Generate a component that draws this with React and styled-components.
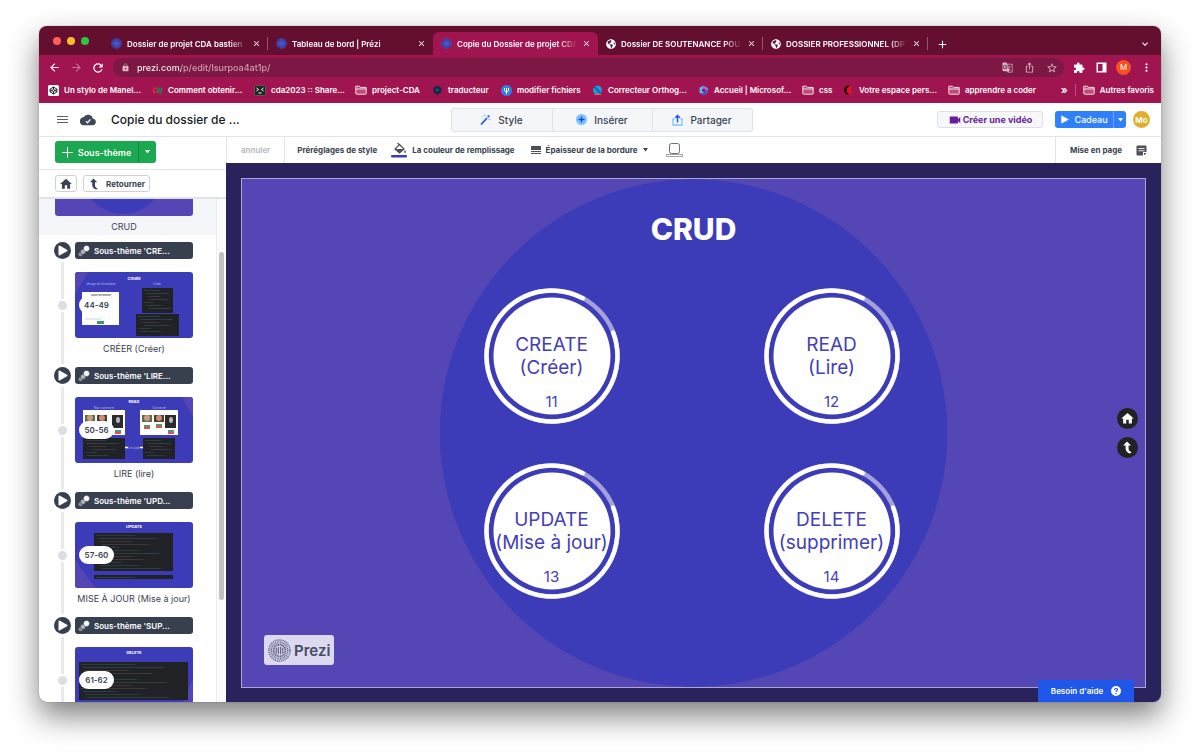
import React from "react";
import styled, { createGlobalStyle, css } from "styled-components";
import {
  MdArrowBack, MdArrowForward, MdRefresh, MdLock, MdGTranslate, MdIosShare, MdStarBorder,
  MdExtension, MdMoreVert, MdAdd, MdClose, MdExpandMore, MdVideocam, MdHome,
} from "react-icons/md";
import { FaGlobeAmericas } from "react-icons/fa";

const Global = createGlobalStyle`
  *, *::before, *::after { box-sizing: border-box; }
  body { margin: 0; background: #fff; font-family: Inter, "Liberation Sans", sans-serif; }
  button, input { font: inherit; color: inherit; border: 0; background: none; padding: 0; margin: 0; }
  button { cursor: pointer; white-space: nowrap; }
  a { color: inherit; text-decoration: none; }
  svg { display: block; flex: none; }
`;

const Page = styled.div`
  height: 100vh;
  min-height: 480px;
  padding: 26px 39px 51px;
  overflow: hidden;
`;

const Window = styled.div`
  height: 100%;
  display: flex;
  flex-direction: column;
  overflow: hidden;
  border-radius: 8px;
  background: #fff;
  box-shadow: 0 0 1px rgba(0, 0, 0, 0.6), 0 14px 30px rgba(0, 0, 0, 0.5);
`;

/* Browser chrome */

const TabStrip = styled.div`
  display: flex;
  align-items: flex-end;
  height: 29px;
  flex: none;
  padding: 0 11px 0 14px;
  background: #640e30;
  color: #fff;
`;

const Lights = styled.div`
  display: flex;
  align-items: center;
  gap: 6px;
  height: 28px;
  width: 50px;
  flex: none;
`;

const Light = styled.span`
  width: 8px;
  height: 8px;
  border-radius: 50%;
  background: ${(p) => p.$color};
`;

const Tab = styled.div`
  display: flex;
  align-items: center;
  gap: 5px;
  flex: 0 1 165px;
  min-width: 0;
  height: 23px;
  padding: 0 7px 0 8px;
  border-radius: 6px 6px 0 0;
  position: relative;
  ${(p) => p.$active && css`background: #a0154f;`}
  ${(p) => p.$divider && css`
    &::after {
      content: "";
      position: absolute;
      right: 0;
      top: 5px;
      width: 1px;
      height: 13px;
      background: #93546c;
    }
  `}
`;

const TabTitle = styled.button`
  flex: 1;
  min-width: 0;
  overflow: hidden;
  text-align: left;
  font-size: 8px;
  font-weight: 600;
  line-height: 12px;
  mask-image: linear-gradient(to right, #000 85%, transparent);
`;

const IconButton = styled.button`
  display: grid;
  place-items: center;
  flex: none;
  width: ${(p) => p.$size || 11}px;
  height: ${(p) => p.$size || 11}px;
  color: ${(p) => p.$color || "inherit"};
`;

const NewTab = styled(IconButton)`
  margin: 0 auto 6px 8px;
`;

const TabMenu = styled(IconButton)`
  margin-bottom: 6px;
`;

const AddressRow = styled.div`
  display: flex;
  align-items: center;
  gap: 8px;
  height: 25px;
  flex: none;
  padding: 0 8px;
  background: #a0154f;
  color: #fff;
`;

const Omnibox = styled.label`
  display: flex;
  align-items: center;
  gap: 11px;
  flex: 1;
  min-width: 0;
  height: 19px;
  padding: 0 7px 0 8px;
  border-radius: 10px;
  background: #7d1844;
  color: #d9b5c5;
`;

const UrlInput = styled.input`
  flex: 1;
  min-width: 0;
  margin-left: -4px;
  font-size: 9px;
  font-weight: 500;
  line-height: 14px;
  outline: 0;
  color: transparent;
  background: linear-gradient(to right, #fff 44px, #d3a3b7 44px);
  -webkit-background-clip: text;
  background-clip: text;
`;

const Profile = styled.button`
  width: 15px;
  height: 15px;
  border-radius: 50%;
  background: #f4511e;
  font-size: 8px;
  line-height: 15px;
  text-align: center;
`;

const BookmarkBar = styled.nav`
  display: flex;
  align-items: center;
  height: 23px;
  flex: none;
  padding: 0 7px 3px 9px;
  background: #a0154f;
  color: #fff;
  overflow: hidden;
`;

const Bookmark = styled.a`
  display: flex;
  align-items: center;
  gap: 5px;
  flex: 0 0 ${(p) => (p.$width ? `${p.$width}px` : "auto")};
  font-size: 8px;
  font-weight: 600;
  line-height: 12px;
  white-space: nowrap;
`;

const MoreBookmarks = styled.button`
  margin-left: auto;
  font-size: 11px;
  font-weight: 600;
  line-height: 12px;
  padding-right: 7px;
  margin-right: 7px;
  border-right: 1px solid #bd4d7b;
`;

/* Application */

const Header = styled.header`
  display: grid;
  grid-template-columns: 1fr auto 1fr;
  align-items: center;
  height: 34px;
  flex: none;
  padding: 0 11px 0 14px;
  border-bottom: 1px solid #e3e4e6;
  color: #3a4250;
`;

const HeaderSide = styled.div`
  display: flex;
  align-items: center;
  gap: 12px;
  padding-left: 3px;
  justify-content: ${(p) => (p.$end ? "flex-end" : "flex-start")};
`;

const Title = styled.h1`
  margin: 0 0 0 3px;
  font-size: 12px;
  font-weight: 500;
  line-height: 16px;
  white-space: nowrap;
  color: #16181c;
`;

const Segments = styled.div`
  display: flex;
  border: 1px solid #dfe2e8;
  border-radius: 3px;
  background: #f5f6f9;
`;

const Segment = styled.button`
  display: flex;
  align-items: center;
  justify-content: center;
  gap: 7px;
  width: 100px;
  height: 22px;
  font-size: 10px;
  font-weight: 500;
  & + & { border-left: 1px solid #dfe2e8; }
`;

const VideoButton = styled.button`
  display: flex;
  align-items: center;
  justify-content: center;
  gap: 1px;
  width: 106px;
  height: 17px;
  border: 1px solid #dcdfe5;
  border-radius: 3px;
  background: #f6f7f9;
  font-size: 9px;
  font-weight: 700;
  color: #6a1b9a;
`;

const SplitButton = styled.div`
  display: flex;
  height: ${(p) => p.$height}px;
  border-radius: 3px;
  overflow: hidden;
  background: ${(p) => p.$bg};
  color: #fff;
`;

const SplitMain = styled.button`
  display: flex;
  align-items: center;
  justify-content: center;
  gap: 5px;
  width: ${(p) => p.$width}px;
  font-size: 9px;
  font-weight: ${(p) => p.$weight};
`;

const SplitMore = styled.button`
  display: grid;
  place-items: center;
  width: ${(p) => p.$width}px;
  border-left: 1px solid ${(p) => p.$line};
`;

const Avatar = styled.button`
  width: 17px;
  height: 17px;
  margin-left: -5px;
  border-radius: 50%;
  background: #e2ad2b;
  color: #fff;
  font-size: 8px;
  font-weight: 700;
`;

const Body = styled.div`
  display: flex;
  flex: 1;
  min-height: 0;
`;

const Sidebar = styled.aside`
  display: flex;
  flex-direction: column;
  width: 187px;
  flex: none;
  color: #3a4250;
`;

const AddRow = styled.div`
  display: flex;
  padding: 4px 16px 6px;
  border-bottom: 1px solid #e3e4e6;
`;

const BackRow = styled.div`
  display: flex;
  gap: 6px;
  padding: 5px 16px;
  border-bottom: 2px solid #e1e3e8;
`;

const OutlineButton = styled.button`
  display: flex;
  align-items: center;
  justify-content: center;
  gap: 6px;
  width: ${(p) => p.$width}px;
  height: 17px;
  border: 1px solid #cfd1d6;
  border-radius: 3px;
  background: #fff;
  font-size: 8px;
  font-weight: 700;
`;

const ListArea = styled.div`
  display: flex;
  flex: 1;
  min-height: 0;
  overflow: hidden;
`;

const PathList = styled.div`
  flex: 1;
  min-width: 0;
`;

const ScrollTrack = styled.div`
  width: 10px;
  flex: none;
  padding: 53px 2px 0;
  background: #fafafa;
  border-left: 1px solid #ededed;
`;

const ScrollThumb = styled.div`
  height: 348px;
  border-radius: 3px;
  background: #c1c1c1;
`;

const CurrentTopic = styled.div`
  height: 36px;
  padding: 0 23px 0 16px;
  background: #f5f6f9;
`;

const Caption = styled.div`
  font-size: 9px;
  font-weight: 400;
  line-height: 12px;
  text-align: center;
  white-space: nowrap;
  padding-top: 5px;
`;

const Topic = styled.section`
  display: grid;
  grid-template-columns: 17px 118px;
  grid-template-rows: 17px 13px 66px 17px;
  column-gap: 4px;
  height: 125px;
  padding: 7px 0 0 15px;
`;

const Rail = styled.span`
  grid-column: 1;
  grid-row: 2 / 5;
  justify-self: center;
  width: 3px;
  height: 102px;
  margin-top: 3px;
  background: #e9eaed;
`;

const RailDot = styled.span`
  grid-column: 1;
  grid-row: 3;
  place-self: center;
  width: 13px;
  height: 13px;
  border: 2px solid #fff;
  border-radius: 50%;
  background: #dcdee2;
  z-index: 1;
`;

const PlayButton = styled.button`
  display: grid;
  place-items: center;
  width: 17px;
  height: 17px;
  border-radius: 50%;
  background: #384050;
  color: #fff;
`;

const TopicButton = styled.button`
  display: flex;
  align-items: center;
  gap: 4px;
  height: 17px;
  padding-left: 3px;
  border-radius: 3px;
  background: #384050;
  color: #fff;
  font-size: 8px;
  font-weight: 600;
`;

const Thumb = styled.button`
  grid-column: 2;
  grid-row: 3;
  display: grid;
  overflow: hidden;
  border-radius: 3px;
  background: #3d3cb8;
  & > * { grid-area: 1 / 1; }
`;

const Range = styled.span`
  place-self: center start;
  margin-left: 4px;
  width: 35px;
  border-radius: 9px;
  background: #fff;
  color: #3a4250;
  font-size: 8px;
  font-weight: 600;
  line-height: 18px;
  text-align: center;
`;

const TopicCaption = styled(Caption)`
  grid-column: 2;
  grid-row: 4;
`;

const Workspace = styled.main`
  display: flex;
  flex-direction: column;
  flex: 1;
  min-width: 0;
  position: relative;
`;

const FormatBar = styled.div`
  display: flex;
  align-items: center;
  height: 26px;
  flex: none;
  border-left: 1px solid #e3e4e6;
  color: #3a4250;
`;

const FormatItem = styled.button`
  display: flex;
  align-items: center;
  gap: 5px;
  height: 100%;
  padding: 0 ${(p) => p.$pad ?? 7}px;
  font-size: 8px;
  font-weight: 700;
  color: ${(p) => (p.disabled ? "#b4b7bd" : "inherit")};
  ${(p) => p.disabled && css`font-weight: 600; border-right: 1px solid #e3e4e6; margin-right: 5px;`}
`;

const LayoutTools = styled.div`
  display: flex;
  align-items: center;
  height: 100%;
  margin-left: auto;
  padding: 0 7px;
  border-left: 1px solid #e3e4e6;
`;

const Canvas = styled.div`
  display: flex;
  flex: 1;
  min-height: 0;
  padding: 15px 15px 14px;
  background: #28235b;
`;

const Slide = styled.div`
  display: flex;
  flex-direction: column;
  align-items: center;
  flex: 1;
  min-width: 0;
  position: relative;
  overflow: hidden;
  border: 1px solid #a9a6cf;
  background: radial-gradient(circle closest-side at center, #3d3cb8 99.8%, #5447b5 100%);
`;

const SlideTitle = styled.h2`
  margin: 32px 0 41px;
  font-size: 30px;
  font-weight: 800;
  line-height: 36px;
  color: #fff;
`;

const Nodes = styled.div`
  display: grid;
  grid-template-columns: 136px 136px;
  gap: 39px 144px;
  margin-right: 4px;
`;

const Node = styled.button`
  display: grid;
  height: 136px;
  color: #4440b5;
  & > * { grid-area: 1 / 1; }
`;

const NodeText = styled.span`
  display: flex;
  flex-direction: column;
  align-items: center;
  padding-top: 45px;
  font-size: 19px;
  font-weight: 400;
  line-height: 23px;
`;

const NodeNumber = styled.span`
  margin-top: 12px;
  font-size: 15px;
  line-height: 22px;
`;

const Brand = styled.div`
  position: absolute;
  left: 22px;
  bottom: 22px;
  display: flex;
  align-items: center;
  gap: 3px;
  height: 30px;
  padding: 0 4px;
  border-radius: 3px;
  background: #dbd8ef;
  color: #434b63;
  font-size: 15px;
  font-weight: 600;
`;

const NavButtons = styled.div`
  position: absolute;
  right: 7px;
  top: 229px;
  display: flex;
  flex-direction: column;
  gap: 8px;
`;

const RoundButton = styled.button`
  display: grid;
  place-items: center;
  width: 21px;
  height: 21px;
  border-radius: 50%;
  background: #222;
  color: #fff;
`;

const Help = styled.button`
  position: absolute;
  right: 27px;
  bottom: 0;
  display: flex;
  align-items: center;
  justify-content: center;
  gap: 8px;
  width: 96px;
  height: 22px;
  border-radius: 3px 3px 0 0;
  background: #1f57ea;
  color: #fff;
  font-size: 8px;
  font-weight: 600;
`;

/* Drawings */

const PreziMark = ({ size = 11, color = "#4a66dc", bg = "#37359a", bars = "#6f86ee" }) => (
  <svg width={size} height={size} viewBox="0 0 24 24" fill="none" stroke={color}>
    {bg !== "none" && <circle cx="12" cy="12" r="11" fill={bg} stroke="none" />}
    <circle cx="12" cy="12" r="11" strokeWidth="1.6" strokeDasharray="1.2 .9" />
    <circle cx="12" cy="12" r="8.6" strokeWidth="1.6" strokeDasharray="1 .7" />
    <circle cx="12" cy="12" r="6.2" strokeWidth="1.8" strokeDasharray="1.4 .5" />
    <path d="M8.6 9v6M10.8 8v8M13.2 8v8M15.4 9v6" strokeWidth="1.2" stroke={bars} />
  </svg>
);

const Folder = () => (
  <svg width="12" height="10" viewBox="0 0 12 10" fill="#b84b7a" stroke="#f2d7e2">
    <path d="M.8 8.6V1.2h3.6l1 1.2h5.8v6.2a.6.6 0 0 1-.6.6H1.4a.6.6 0 0 1-.6-.6ZM.8 4h10.4" />
  </svg>
);

const Codepen = () => (
  <svg width="11" height="11" viewBox="0 0 22 22">
    <rect width="22" height="22" rx="3" fill="#fff" />
    <path d="m11 4 7 4.500v5L11 18l-7-4.500v-5Zm0 0v4.800M11 18v-4.800M4 8.500l7 4.700 7-4.700M4 13.500l7-4.700 7 4.700" fill="none" stroke="#111" strokeWidth="1.8" />
  </svg>
);

const Waves = () => (
  <svg width="11" height="11" viewBox="0 0 22 22" fill="none" strokeWidth="3">
    <path d="M9 7C4 4 2 8 3 13c1 3 4 3 6 0" stroke="#e02b38" />
    <path d="m10 6 2.500 9L15 8l2.500 7L20 5" stroke="#2a7a55" />
  </svg>
);

const Terminal = () => (
  <svg width="12" height="11" viewBox="0 0 24 22" fill="none">
    <rect x="1" y="1" width="22" height="20" rx="2" fill="#1d2621" stroke="#71857a" />
    <path d="m5 6 4 3-4 3M19 6l-4 3 4 3M9 16h6" stroke="#fff" strokeWidth="2" />
  </svg>
);

const DeepL = () => (
  <svg width="11" height="11" viewBox="0 0 22 22">
    <path d="m11 1 8 4.500v9L11 19l4 3-6-3-6-4.500v-9Z" fill="#0f2b46" />
    <path d="m8 7 5 3-5 3" fill="none" stroke="#4f7794" strokeWidth="1.500" />
  </svg>
);

const BlueFork = () => (
  <svg width="11" height="11" viewBox="0 0 22 22">
    <circle cx="11" cy="11" r="11" fill="#2f7df0" />
    <path d="M7 6v4c0 5 8 5 8 0V6M11 6v12" fill="none" stroke="#fff" strokeWidth="2" />
  </svg>
);

const BlueLeaf = () => (
  <svg width="11" height="11" viewBox="0 0 22 22">
    <circle cx="11" cy="10" r="9" fill="#1d9ad6" />
    <path d="m5 3 12 14" stroke="#0d5fa8" strokeWidth="3.500" />
    <path d="M5 19h13" stroke="#ee5a5a" strokeWidth="2" />
  </svg>
);

const Microsoft = () => (
  <svg width="11" height="11" viewBox="0 0 22 22">
    <path d="M11 1 3 5.500v10L11 20V14l-3-2V9l3-2Z" fill="#55b9f5" />
    <path d="m5 17 6 4 9-5.500V10l-5 1v3l-4 2Z" fill="#4657d8" />
    <path d="m11 1 9 5v5l-5 0V9l-4-2Z" fill="#8b73f0" />
  </svg>
);

const RedMoon = () => (
  <svg width="11" height="11" viewBox="0 0 22 22">
    <path d="M13 1C3 1 0 8 3 14c2 4 5 6 9 6-6-6-6-13 1-19Z" fill="#1a0510" />
    <path d="M18 2c-8 0-12 5-10 11 2 5 6 7 9 6V12h-4l4-4Z" fill="#e3121f" />
  </svg>
);

const SidePanel = () => (
  <svg width="11" height="11" viewBox="0 0 22 22">
    <path d="M1 1h20v20H1Zm3 3v14h9V4Z" fill="#fff" fillRule="evenodd" />
  </svg>
);

const Burger = () => (
  <svg width="12" height="9" viewBox="0 0 12 9" stroke="#5b6068">
    <path d="M1 1.500h11M1 4.500h11M1 7.500h11" />
  </svg>
);

const CloudCheck = () => (
  <svg width="16" height="16" viewBox="0 0 24 24">
    <path d="M19.350 10.040A7.490 7.490 0 0 0 5.350 8.040 5.994 5.994 0 0 0 6 20h13a5 5 0 0 0 .350-9.960Z" fill="#3f4857" />
    <path d="m9 14 2.300 2.300L15.500 11" fill="none" stroke="#fff" strokeWidth="2" />
  </svg>
);

const Wand = () => (
  <svg width="11" height="11" viewBox="0 0 22 22" fill="none">
    <path d="M2 21 14 8" stroke="#1f57ea" strokeWidth="3.400" />
    <path d="m15.500 6.500 3-3.500" stroke="#1f57ea" strokeWidth="3.400" />
    <path d="M9 1v4M7 3h4M3 4v2M14 1v2M19 9v4M17 11h4M4 9h2" stroke="#7cc4ff" strokeWidth="1.500" />
  </svg>
);

const PlusDisc = () => (
  <svg width="11" height="11" viewBox="0 0 22 22">
    <circle cx="11" cy="11" r="11" fill="#7cc4ff" />
    <path d="M11 5v12M5 11h12" stroke="#1646d8" strokeWidth="2.600" />
  </svg>
);

const ShareUp = () => (
  <svg width="11" height="12" viewBox="0 0 22 24" fill="none">
    <path d="M5 10H2v12h18V10h-3" stroke="#7cc4ff" strokeWidth="2.600" />
    <path d="M11 17V4M6.500 7.500 11 3l4.500 4.500" stroke="#1f57ea" strokeWidth="3" />
  </svg>
);

const Triangle = ({ w = 5, h = 4 }) => (
  <svg width={w} height={h} viewBox="0 0 10 8" fill="currentColor"><path d="M0 0h10L5 7Z" /></svg>
);

const PlayShape = ({ size = 9 }) => (
  <svg width={size} height={size} viewBox="0 0 18 18" fill="currentColor"><path d="M3 1.500 17 9 3 16.500Z" stroke="currentColor" strokeLinejoin="round" /></svg>
);

const TopicPlay = () => (
  <svg width="17" height="17" viewBox="0 0 17 17" fill="#fff" stroke="#fff">
    <path d="M5.500 4.500 12.500 8.500 5.500 12.500Z" strokeWidth="2" strokeLinejoin="round" />
  </svg>
);

const Plus = () => (
  <svg width="11" height="11" viewBox="0 0 11 11" stroke="#fff"><path d="M5.500 0v11M0 5.500h11" /></svg>
);

const ReturnArrow = ({ size = 12 }) => (
  <svg width={size} height={size} viewBox="0 0 24 24" fill="currentColor">
    <path d="M11 1 4 8.500h4.500V14c0 5 3.500 8.500 8.500 9l2.500-2.500c-4-.5-5.500-3-5.500-6.500V8.500h4.500Z" />
  </svg>
);

const Trail = () => (
  <svg width="12" height="12" viewBox="0 0 24 24">
    <circle cx="5" cy="18.500" r="4" fill="#8b909a" />
    <circle cx="10" cy="13.500" r="5" fill="#b3b7be" stroke="#384050" />
    <circle cx="17" cy="7" r="6" fill="#fff" stroke="#384050" />
  </svg>
);

const FillIcon = () => (
  <svg width="16" height="16" viewBox="0 0 32 32">
    <path d="m13 2 3.500 3.500M17 5 26 14 17 22 8 14Z" fill="none" stroke="#4a4f58" strokeWidth="2.400" />
    <path d="M8.500 14h17L17 22Z" fill="#4a4f58" />
    <path d="M28 16c-3 4-1.500 6 0 6s3-2 0-6Z" fill="#4a4f58" />
    <rect y="26" width="32" height="5" rx="2" fill="#3d3cb8" />
  </svg>
);

const Weight = () => (
  <svg width="10" height="9" viewBox="0 0 10 9" fill="#4a4f58">
    <path d="M0 0h10v4H0ZM0 5h10v1H0ZM0 7h10v1H0Z" />
  </svg>
);

const BorderShape = () => (
  <svg width="17" height="16" viewBox="0 0 17 16" fill="none" stroke="#6b7078">
    <rect x="3.500" y="1.500" width="10" height="10" rx="2" />
    <rect x=".5" y="12.500" width="16" height="2" stroke="#a3a6ac" />
  </svg>
);

const Note = () => (
  <svg width="11" height="11" viewBox="0 0 22 22">
    <path d="M3 1h16a2 2 0 0 1 2 2v11h-7v7H3a2 2 0 0 1-2-2V3a2 2 0 0 1 2-2Zm13 15h5l-5 5Z" fill="#4d5159" />
    <path d="M5 7h12M5 11.500h12" stroke="#fff" strokeWidth="1.800" />
  </svg>
);

const HelpMark = () => (
  <svg width="10" height="10" viewBox="0 0 20 20">
    <circle cx="10" cy="10" r="10" fill="#fff" />
    <path d="M7 8c0-4 6-4 6-.5 0 2-3 2-3 4.500M10 14v2" fill="none" stroke="#1f57ea" strokeWidth="2.200" />
  </svg>
);

const Ring = () => (
  <svg width="136" height="136" viewBox="0 0 136 136">
    <circle cx="68" cy="68" r="58.500" fill="#fff" />
    <circle cx="68" cy="68" r="65.500" fill="none" stroke="#a3a0dc" strokeWidth="4.500" />
    <path d="M129.100 44.500A65.500 65.500 0 1 1 98.700 10.200" fill="none" stroke="#fff" strokeWidth="4.500" strokeLinecap="round" />
  </svg>
);

const lineColors = ["#3e6b4a", "#46698a", "#7d5242", "#5b5f6b", "#3c5f7d"];

const CodeBlock = ({ x, y, w, h }) => {
  const rows = Math.max(1, Math.floor((h - 2) / 3));
  return (
    <g>
      <rect x={x} y={y} width={w} height={h} fill="#212226" />
      {Array.from({ length: rows }, (_, i) => (
        <rect
          key={i}
          x={x + 2 + (i % 4) * 2}
          y={y + 2 + i * 3}
          width={w * [0.5, 0.75, 0.4, 0.6, 0.3][i % 5]}
          height="1"
          fill={lineColors[i % 5]}
          opacity="0.4"
        />
      ))}
    </g>
  );
};

const ThumbText = ({ x, y, size = 4, weight = 700, children, fill = "#fff" }) => (
  <text x={x} y={y} fontSize={size} fontWeight={weight} fill={fill} textAnchor="middle">{children}</text>
);

const Portraits = ({ x, y, w, h }) => (
  <g>
    <rect x={x} y={y} width={w} height={h} fill="#fff" />
    <rect x={x + 2} y={y + 5} width="10" height="7" fill="#5e6d4c" />
    <circle cx={x + 7} cy={y + 8} r="3" fill="#c99b80" />
    <rect x={x + 14} y={y + 5} width="10" height="7" fill="#57382e" />
    <circle cx={x + 19} cy={y + 8} r="3" fill="#c98f76" />
    <rect x={w + x - 13} y={y + 5} width="11" height="13" fill="#2b2b2e" />
    <ellipse cx={w + x - 7} cy={y + 10} rx="2" ry="3" fill="#b9b9b9" />
    <rect x={x + 4} y={y + 15} width="6" height="2" fill="#4a9c6d" />
    <rect x={x + 4} y={y + 17} width="6" height="2" fill="#e35050" />
    <rect x={x + 16} y={y + 14} width="6" height="2" fill="#4a9c6d" />
    <rect x={x + 16} y={y + 16} width="6" height="2" fill="#e35050" />
    <rect x={w + x - 10} y={y + 20} width="6" height="2" fill="#4a9c6d" />
    <rect x={w + x - 10} y={y + 22} width="6" height="2" fill="#e35050" />
  </g>
);

const CreateArt = () => (
  <svg width="118" height="66" viewBox="0 0 118 66">
    <path d="M0 0h13L0 22Z" fill="#5447b5" />
    <ThumbText x={59} y={8}>Create</ThumbText>
    <ThumbText x={26} y={13} size={3} weight={400} fill="#b9b8ea">design du formulaire</ThumbText>
    <ThumbText x={82} y={13} size={3} weight={400} fill="#b9b8ea">Code</ThumbText>
    <rect x="7" y="20" width="37" height="33" fill="#fff" />
    <ThumbText x={26} y={24} size={2} fill="#555">Ajouter une annonce</ThumbText>
    <path d="M10 47h16" stroke="#c6d3ee" />
    <rect x="22" y="49" width="7" height="3" fill="#3f9b63" />
    <CodeBlock x={67} y={16} w={31} h={25} />
    <CodeBlock x={61} y={42} w={43} h={22} />
  </svg>
);

const ReadArt = () => (
  <svg width="118" height="66" viewBox="0 0 118 66">
    <path d="M107 0h11v20Z" fill="#5447b5" />
    <ThumbText x={59} y={6}>READ</ThumbText>
    <ThumbText x={29} y={12} size={3} weight={400} fill="#b9b8ea">Non connecté</ThumbText>
    <ThumbText x={84} y={12} size={3} weight={400} fill="#b9b8ea">Connecté</ThumbText>
    <Portraits x={8} y={13} w={42} h={25} />
    <Portraits x={65} y={13} w={38} h={25} />
    <CodeBlock x={8} y={41} w={42} h={21} />
    <CodeBlock x={68} y={41} w={32} h={21} />
    <path d="M50 50.500h3M65 50.500h3" stroke="#fff" strokeWidth="1.500" />
    <ThumbText x={59} y={52} size={3} weight={400} fill="#b9b8ea">Le code</ThumbText>
  </svg>
);

const UpdateArt = () => (
  <svg width="118" height="66" viewBox="0 0 118 66">
    <path d="M0 37c6 10 13 21 21 29H0Z" fill="#5447b5" />
    <ThumbText x={59} y={6}>UPDATE</ThumbText>
    <CodeBlock x={19} y={11} w={79} h={38} />
    <CodeBlock x={19} y={53} w={79} h={4} />
  </svg>
);

const DeleteArt = () => (
  <svg width="118" height="66" viewBox="0 0 118 66">
    <path d="M118 32v34h-14Z" fill="#5447b5" />
    <ThumbText x={59} y={7}>DELETE</ThumbText>
    <CodeBlock x={4} y={15} w={109} h={38} />
  </svg>
);

const CrudArt = () => (
  <svg width="138" height="17" viewBox="0 0 138 17">
    <path d="M0 0h138v14a3 3 0 0 1-3 3H3a3 3 0 0 1-3-3Z" fill="#5447b5" />
    <path d="M36 0c18 20 46 20 64 0Z" fill="#3d3cb8" />
  </svg>
);

/* Content */

const prezi = <PreziMark />;
const globe = <FaGlobeAmericas size={10} />;

const tabs = [
  { icon: prezi, title: "Dossier de projet CDA bastien", divider: true },
  { icon: prezi, title: "Tableau de bord | Prézi" },
  { icon: prezi, title: "Copie du Dossier de projet CDA", active: true },
  { icon: globe, title: "Dossier DE SOUTENANCE POU", divider: true },
  { icon: globe, title: "DOSSIER PROFESSIONNEL (DP", divider: true },
];

const bookmarks = [
  { icon: <Codepen />, label: "Un stylo de Manel...", width: 104 },
  { icon: <Waves />, label: "Comment obtenir...", width: 102 },
  { icon: <Terminal />, label: "cda2023 :: Share...", width: 101 },
  { icon: <Folder />, label: "project-CDA", width: 77 },
  { icon: <DeepL />, label: "traducteur", width: 69 },
  { icon: <BlueFork />, label: "modifier fichiers", width: 91 },
  { icon: <BlueLeaf />, label: "Correcteur Orthog...", width: 106 },
  { icon: <Microsoft />, label: "Accueil | Microsof...", width: 104 },
  { icon: <Folder />, label: "css", width: 41 },
  { icon: <RedMoon />, label: "Votre espace pers...", width: 105 },
  { icon: <Folder />, label: "apprendre a coder" },
];

const topics = [
  { name: "Sous-thème 'CRE...", range: "44-49", caption: "CRÉER (Créer)", art: <CreateArt /> },
  { name: "Sous-thème 'LIRE...", range: "50-56", caption: "LIRE (lire)", art: <ReadArt /> },
  { name: "Sous-thème 'UPD...", range: "57-60", caption: "MISE À JOUR (Mise à jour)", art: <UpdateArt /> },
  { name: "Sous-thème 'SUP...", range: "61-62", art: <DeleteArt /> },
];

const nodes = [
  ["CREATE", "(Créer)", 11],
  ["READ", "(Lire)", 12],
  ["UPDATE", "(Mise à jour)", 13],
  ["DELETE", "(supprimer)", 14],
];

const BrowserChrome = () => (
  <>
    <TabStrip>
      <Lights>
        <Light $color="#ff5f57" />
        <Light $color="#febc2e" />
        <Light $color="#28c840" />
      </Lights>
      {tabs.map((t) => (
        <Tab key={t.title} $active={t.active} $divider={t.divider}>
          {t.icon}
          <TabTitle>{t.title}</TabTitle>
          <IconButton $size={9} aria-label="Fermer l'onglet"><MdClose size={9} /></IconButton>
        </Tab>
      ))}
      <NewTab aria-label="Nouvel onglet"><MdAdd size={13} /></NewTab>
      <TabMenu aria-label="Rechercher des onglets"><MdExpandMore size={12} /></TabMenu>
    </TabStrip>
    <AddressRow>
      <IconButton $size={14} aria-label="Précédent"><MdArrowBack size={13} /></IconButton>
      <IconButton $size={14} $color="#c8749a" aria-label="Suivant"><MdArrowForward size={13} /></IconButton>
      <IconButton $size={14} aria-label="Actualiser"><MdRefresh size={14} /></IconButton>
      <Omnibox>
        <MdLock size={9} />
        <UrlInput aria-label="Adresse" defaultValue="prezi.com/p/edit/lsurpoa4at1p/" />
        <IconButton aria-label="Traduire"><MdGTranslate size={11} /></IconButton>
        <IconButton aria-label="Partager la page"><MdIosShare size={11} /></IconButton>
        <IconButton aria-label="Ajouter aux favoris"><MdStarBorder size={12} /></IconButton>
      </Omnibox>
      <IconButton $size={14} aria-label="Extensions"><MdExtension size={12} /></IconButton>
      <IconButton $size={14} aria-label="Panneau latéral"><SidePanel /></IconButton>
      <Profile>M</Profile>
      <IconButton $size={14} aria-label="Menu"><MdMoreVert size={13} /></IconButton>
    </AddressRow>
    <BookmarkBar>
      {bookmarks.map((b) => (
        <Bookmark key={b.label} href="#" $width={b.width}>{b.icon}{b.label}</Bookmark>
      ))}
      <MoreBookmarks>»</MoreBookmarks>
      <Bookmark href="#"><Folder />Autres favoris</Bookmark>
    </BookmarkBar>
  </>
);

const AppHeader = () => (
  <Header>
    <HeaderSide>
      <IconButton $size={12} aria-label="Menu"><Burger /></IconButton>
      <CloudCheck />
      <Title>Copie du dossier de ...</Title>
    </HeaderSide>
    <Segments>
      <Segment><Wand />Style</Segment>
      <Segment><PlusDisc />Insérer</Segment>
      <Segment><ShareUp />Partager</Segment>
    </Segments>
    <HeaderSide $end>
      <VideoButton><MdVideocam size={14} />Créer une vidéo</VideoButton>
      <SplitButton $height={17} $bg="#2f80fa">
        <SplitMain $width={58} $weight={500}><PlayShape />Cadeau</SplitMain>
        <SplitMore $width={13} $line="#6ba6fc" aria-label="Autres options"><Triangle /></SplitMore>
      </SplitButton>
      <Avatar>Mo</Avatar>
    </HeaderSide>
  </Header>
);

const TopicSidebar = () => (
  <Sidebar>
    <AddRow>
      <SplitButton $height={22} $bg="#1aa850">
        <SplitMain $width={83} $weight={600}><Plus />Sous-thème</SplitMain>
        <SplitMore $width={18} $line="#138a41" aria-label="Choisir un type"><Triangle /></SplitMore>
      </SplitButton>
    </AddRow>
    <BackRow>
      <OutlineButton $width={22} aria-label="Accueil"><MdHome size={14} /></OutlineButton>
      <OutlineButton $width={67}><ReturnArrow />Retourner</OutlineButton>
    </BackRow>
    <ListArea>
      <PathList>
        <CurrentTopic>
          <CrudArt />
          <Caption>CRUD</Caption>
        </CurrentTopic>
        {topics.map((t) => (
          <Topic key={t.range}>
            <PlayButton aria-label={`Lire ${t.name}`}><TopicPlay /></PlayButton>
            <TopicButton><Trail />{t.name}</TopicButton>
            <Rail />
            <RailDot />
            <Thumb>
              {t.art}
              <Range>{t.range}</Range>
            </Thumb>
            {t.caption && <TopicCaption>{t.caption}</TopicCaption>}
          </Topic>
        ))}
      </PathList>
      <ScrollTrack><ScrollThumb /></ScrollTrack>
    </ListArea>
  </Sidebar>
);

export default function App() {
  return (
    <Page>
      <Global />
      <Window>
        <BrowserChrome />
        <AppHeader />
        <Body>
          <TopicSidebar />
          <Workspace>
            <FormatBar>
              <FormatItem disabled $pad={14}>annuler</FormatItem>
              <FormatItem>Préréglages de style</FormatItem>
              <FormatItem><FillIcon />La couleur de remplissage</FormatItem>
              <FormatItem $pad={9}><Weight />Épaisseur de la bordure<Triangle /></FormatItem>
              <FormatItem $pad={9} aria-label="Forme de la bordure"><BorderShape /></FormatItem>
              <LayoutTools>
                <FormatItem>Mise en page</FormatItem>
                <FormatItem aria-label="Notes"><Note /></FormatItem>
              </LayoutTools>
            </FormatBar>
            <Canvas>
              <Slide>
                <SlideTitle>CRUD</SlideTitle>
                <Nodes>
                  {nodes.map(([name, sub, n]) => (
                    <Node key={name}>
                      <Ring />
                      <NodeText>
                        <span>{name}</span>
                        <span>{sub}</span>
                        <NodeNumber>{n}</NodeNumber>
                      </NodeText>
                    </Node>
                  ))}
                </Nodes>
                <Brand><PreziMark size={23} color="#5a5f80" bg="none" bars="#5a5f80" />Prezi</Brand>
                <NavButtons>
                  <RoundButton aria-label="Accueil"><MdHome size={15} /></RoundButton>
                  <RoundButton aria-label="Retour"><ReturnArrow size={13} /></RoundButton>
                </NavButtons>
              </Slide>
            </Canvas>
            <Help>Besoin d'aide <HelpMark /></Help>
          </Workspace>
        </Body>
      </Window>
    </Page>
  );
}
